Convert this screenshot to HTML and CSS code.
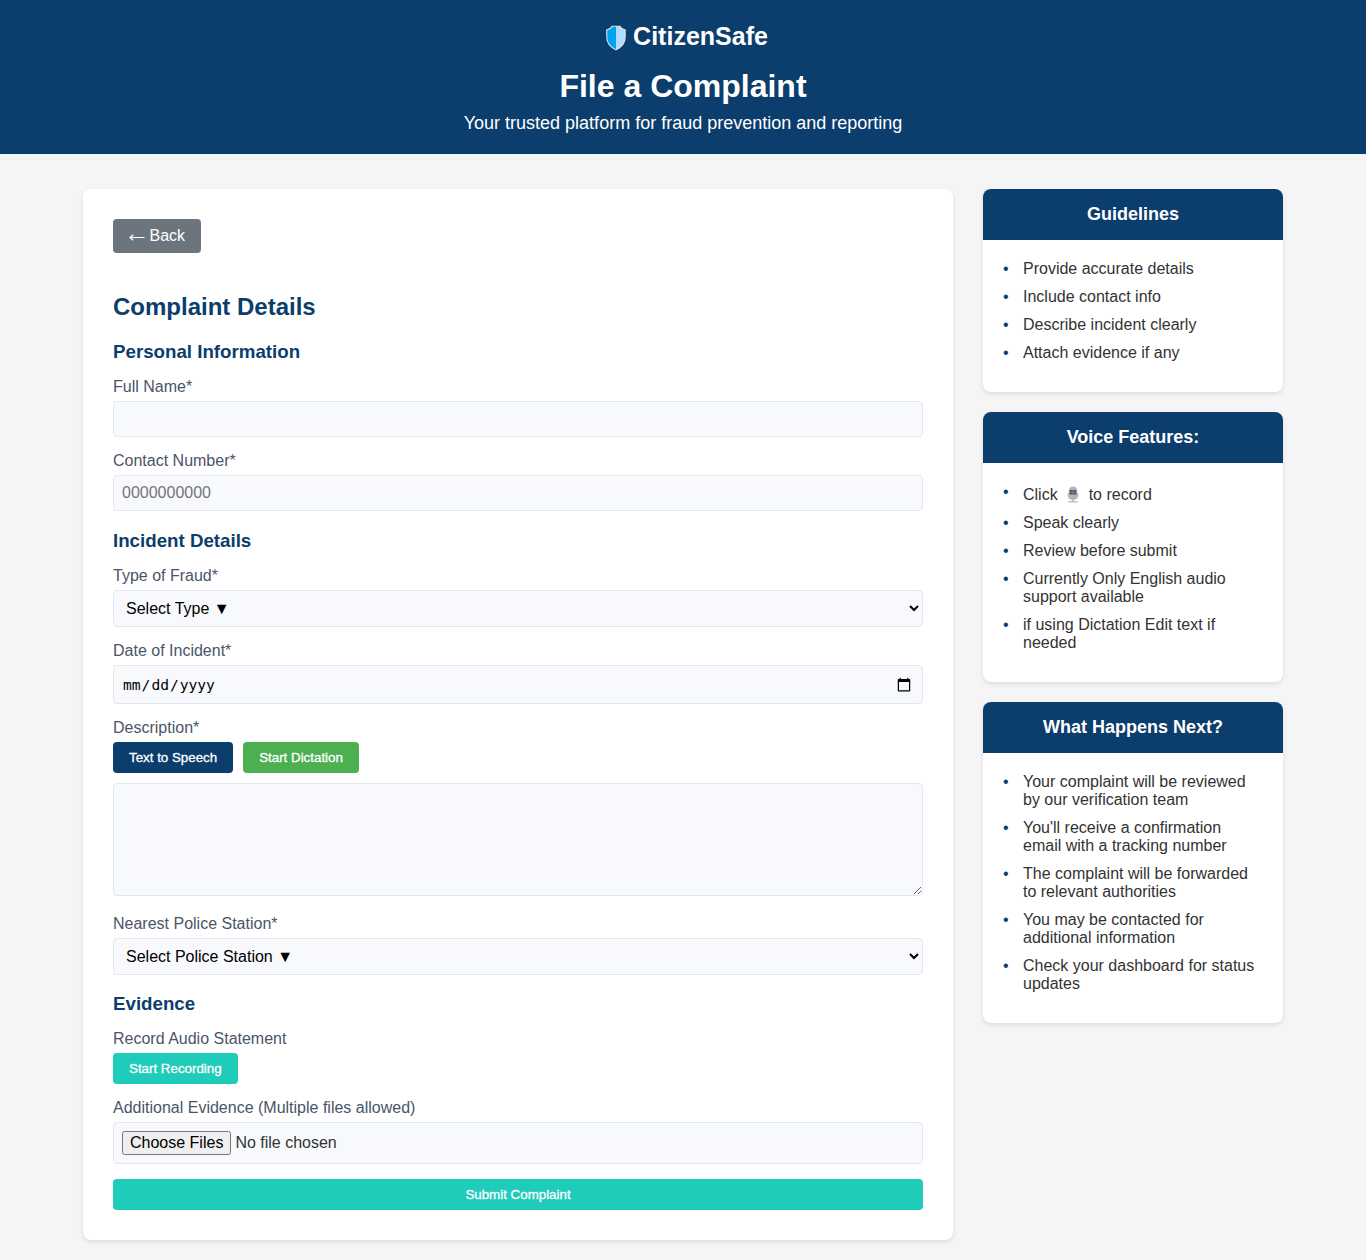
FILE: index.html
```html
<!DOCTYPE html>
<html lang="en">
<head>
<meta charset="UTF-8">
<title>CitizenSafe - File a Complaint</title>
<link rel="stylesheet" href="styles.css">
</head>
<body>
<header class="site-header">
  <div class="logo">
    <svg class="shield" width="22" height="26" viewBox="0 0 22 26" aria-hidden="true">
      <path d="M6.5 .8H15.5Q16.5 3.6 20.8 4.4V12Q20.8 21 11 25.4Q1.2 21 1.2 12V4.4Q5.5 3.6 6.5 .8Z" fill="#d9dde2"/>
      <path d="M11 1.8H7.3Q6.2 4.6 2.3 5.4V12Q2.4 20.3 11 24.2Z" fill="#00a3ee"/>
      <path d="M11 1.8H14.7Q15.8 4.6 19.7 5.4V12Q19.6 20.3 11 24.2Z" fill="#b0ddff"/>
    </svg>
    <span>CitizenSafe</span>
  </div>
  <h1>File a Complaint</h1>
  <p class="tagline">Your trusted platform for fraud prevention and reporting</p>
</header>
<main class="container">
  <section class="form-panel">
    <button class="back-btn" type="button">
      <svg width="16" height="10" viewBox="0 0 16 10" fill="none" stroke="#fff" stroke-width="1.2" aria-hidden="true"><path d="M15.5 5.5H1M4.2 2.7L1 5.5L4.2 8.3"/></svg>
      <span>Back</span>
    </button>
    <h2>Complaint Details</h2>
    <form>
      <h3>Personal Information</h3>
      <div class="group">
        <label for="name">Full Name*</label>
        <input class="field" id="name" type="text">
      </div>
      <div class="group">
        <label for="phone">Contact Number*</label>
        <input class="field" id="phone" type="tel" placeholder="0000000000">
      </div>
      <h3 class="incident">Incident Details</h3>
      <div class="group">
        <label for="type">Type of Fraud*</label>
        <select class="field select" id="type"><option>Select Type ▼</option></select>
      </div>
      <div class="group">
        <label for="date">Date of Incident*</label>
        <input class="field date" id="date" type="date">
      </div>
      <div class="group description">
        <label for="desc">Description*</label>
        <div class="voice-controls">
          <button class="btn btn-navy" type="button">Text to Speech</button>
          <button class="btn btn-green" type="button">Start Dictation</button>
        </div>
        <textarea class="field area" id="desc"></textarea>
      </div>
      <div class="group">
        <label for="station">Nearest Police Station*</label>
        <select class="field select" id="station"><option>Select Police Station ▼</option></select>
      </div>
      <h3 class="evidence">Evidence</h3>
      <div class="group">
        <label>Record Audio Statement</label>
        <button class="btn" type="button">Start Recording</button>
      </div>
      <div class="group">
        <label for="files">Additional Evidence (Multiple files allowed)</label>
        <input class="field file" id="files" type="file" multiple>
      </div>
      <button class="btn submit" type="button">Submit Complaint</button>
    </form>
  </section>
  <aside class="sidebar">
    <section class="card">
      <h3>Guidelines</h3>
      <ul>
        <li>Provide accurate details</li>
        <li>Include contact info</li>
        <li>Describe incident clearly</li>
        <li>Attach evidence if any</li>
      </ul>
    </section>
    <section class="card">
      <h3>Voice Features:</h3>
      <ul>
        <li class="with-icon"><span>Click</span>
          <svg class="mic" width="12" height="18" viewBox="0 0 12 18" aria-hidden="true">
            <rect x="2" y=".5" width="8" height="12.5" rx="4" fill="#b6b2c2"/>
            <path d="M2.6 4H9.4V8.6H2.6Z" fill="#554f5c"/>
            <path d="M2.6 6.3H9.4M6 4V8.6" stroke="#8f899a" stroke-width=".8"/>
            <path d="M1.3 7V9.5Q1.6 13.2 6 13.2T10.7 9.5V7" fill="none" stroke="#aaa5b8" stroke-width="1.1"/>
            <path d="M5 13H7V15H10.5V16.6H1.5V15H5Z" fill="#c1bccd"/>
          </svg>
          <span>to record</span></li>
        <li>Speak clearly</li>
        <li>Review before submit</li>
        <li>Currently Only English audio support available</li>
        <li>if using Dictation Edit text if needed</li>
      </ul>
    </section>
    <section class="card">
      <h3>What Happens Next?</h3>
      <ul>
        <li>Your complaint will be reviewed by our verification team</li>
        <li>You'll receive a confirmation email with a tracking number</li>
        <li>The complaint will be forwarded to relevant authorities</li>
        <li>You may be contacted for additional information</li>
        <li>Check your dashboard for status updates</li>
      </ul>
    </section>
  </aside>
</main>
</body>
</html>
```
FILE: styles.css
```css
* {
  box-sizing: border-box;
  margin: 0;
  padding: 0;
}

body {
  font-family: "Liberation Sans", Arial, sans-serif;
  font-size: 16px;
  line-height: 18px;
  color: #333;
  background: #f5f5f5;
}

.site-header {
  height: 154px;
  padding-top: 20px;
  color: #fff;
  text-align: center;
  background: #0b3d6d;
}

.logo {
  display: flex;
  justify-content: center;
  align-items: center;
  gap: 6px;
  height: 32px;
  padding-left: 7px;
  font-size: 25px;
  font-weight: bold;
}

.shield {
  margin-top: 3px;
}

h1 {
  margin-top: 16px;
  font-size: 32px;
  line-height: 37px;
}

.tagline {
  margin-top: 8px;
  font-size: 18px;
  line-height: 21px;
}

.container {
  display: grid;
  grid-template-columns: 870px 300px;
  gap: 30px;
  justify-content: center;
  align-items: start;
  padding: 35px 0 20px;
}

.form-panel {
  height: 1051px;
  padding: 30px;
  background: #fff;
  border-radius: 8px;
  box-shadow: 0 2px 4px rgba(0, 0, 0, 0.1);
}

.back-btn {
  display: flex;
  align-items: center;
  gap: 4.5px;
  width: 88px;
  height: 34px;
  padding: 0 0 0 16px;
  font: 16px "Liberation Sans", Arial, sans-serif;
  color: #fff;
  background: #6c757d;
  border: 0;
  border-radius: 4px;
}

.back-btn svg {
  margin-top: 2px;
}

h2 {
  margin-top: 40px;
  font-size: 24px;
  line-height: 27px;
  color: #0b3d6d;
}

.form-panel h3 {
  margin: 21px 0 16px;
  font-size: 18.72px;
  line-height: 21px;
  color: #0b3d6d;
}

.form-panel .incident {
  margin-top: 19px;
}

.form-panel .evidence {
  margin: 18px 0 16px;
}

.group + .group {
  margin-top: 15px;
}

.group.description + .group {
  margin-top: 19px;
}

label {
  display: block;
  margin-bottom: 5px;
  color: #4a5568;
}

.field {
  display: block;
  width: 100%;
  height: 36px;
  padding: 8px;
  font: 16px "Liberation Sans", Arial, sans-serif;
  background-color: #f8f9fc;
  border: 1px solid #e2e8f0;
  border-radius: 4px;
}

.select {
  height: 37px;
  color: #000;
}

.date {
  height: 39px;
  font-family: "DejaVu Sans Mono", monospace;
  font-size: 14.6px;
}

.date::-webkit-calendar-picker-indicator {
  font-size: 16px;
}

.area {
  height: 113px;
  resize: vertical;
}

.file {
  height: 42px;
  color: #333;
}

.voice-controls {
  display: flex;
  gap: 10px;
  margin-bottom: 10px;
}

.btn {
  display: block;
  height: 31px;
  padding: 0 16px;
  font: 500 13.333px "Liberation Sans", Arial, sans-serif;
  color: #fff;
  background: #1fcbb9;
  border: 0;
  border-radius: 4px;
  -webkit-text-stroke: 0.3px #fff;
}

.btn-navy {
  background: #0b3d6d;
}

.btn-green {
  background: #4caf50;
}

.submit {
  width: 100%;
  margin-top: 15px;
}

.sidebar {
  display: grid;
  gap: 20px;
}

.card {
  overflow: hidden;
  background: #fff;
  border-radius: 8px;
  box-shadow: 0 2px 4px rgba(0, 0, 0, 0.1);
}

.card h3 {
  padding: 15px;
  font-size: 18px;
  line-height: 21px;
  color: #fff;
  text-align: center;
  background: #0b3d6d;
}

.card ul {
  padding: 20px;
  list-style: none;
}

.card li {
  position: relative;
  margin-bottom: 10px;
  padding-left: 20px;
}

.card li::before {
  position: absolute;
  top: 0;
  left: 0;
  color: #0b3d6d;
  content: "•";
}

.card .with-icon {
  display: flex;
  align-items: flex-end;
  height: 21px;
}

.mic {
  margin: 0 10px 0 9px;
}
```
